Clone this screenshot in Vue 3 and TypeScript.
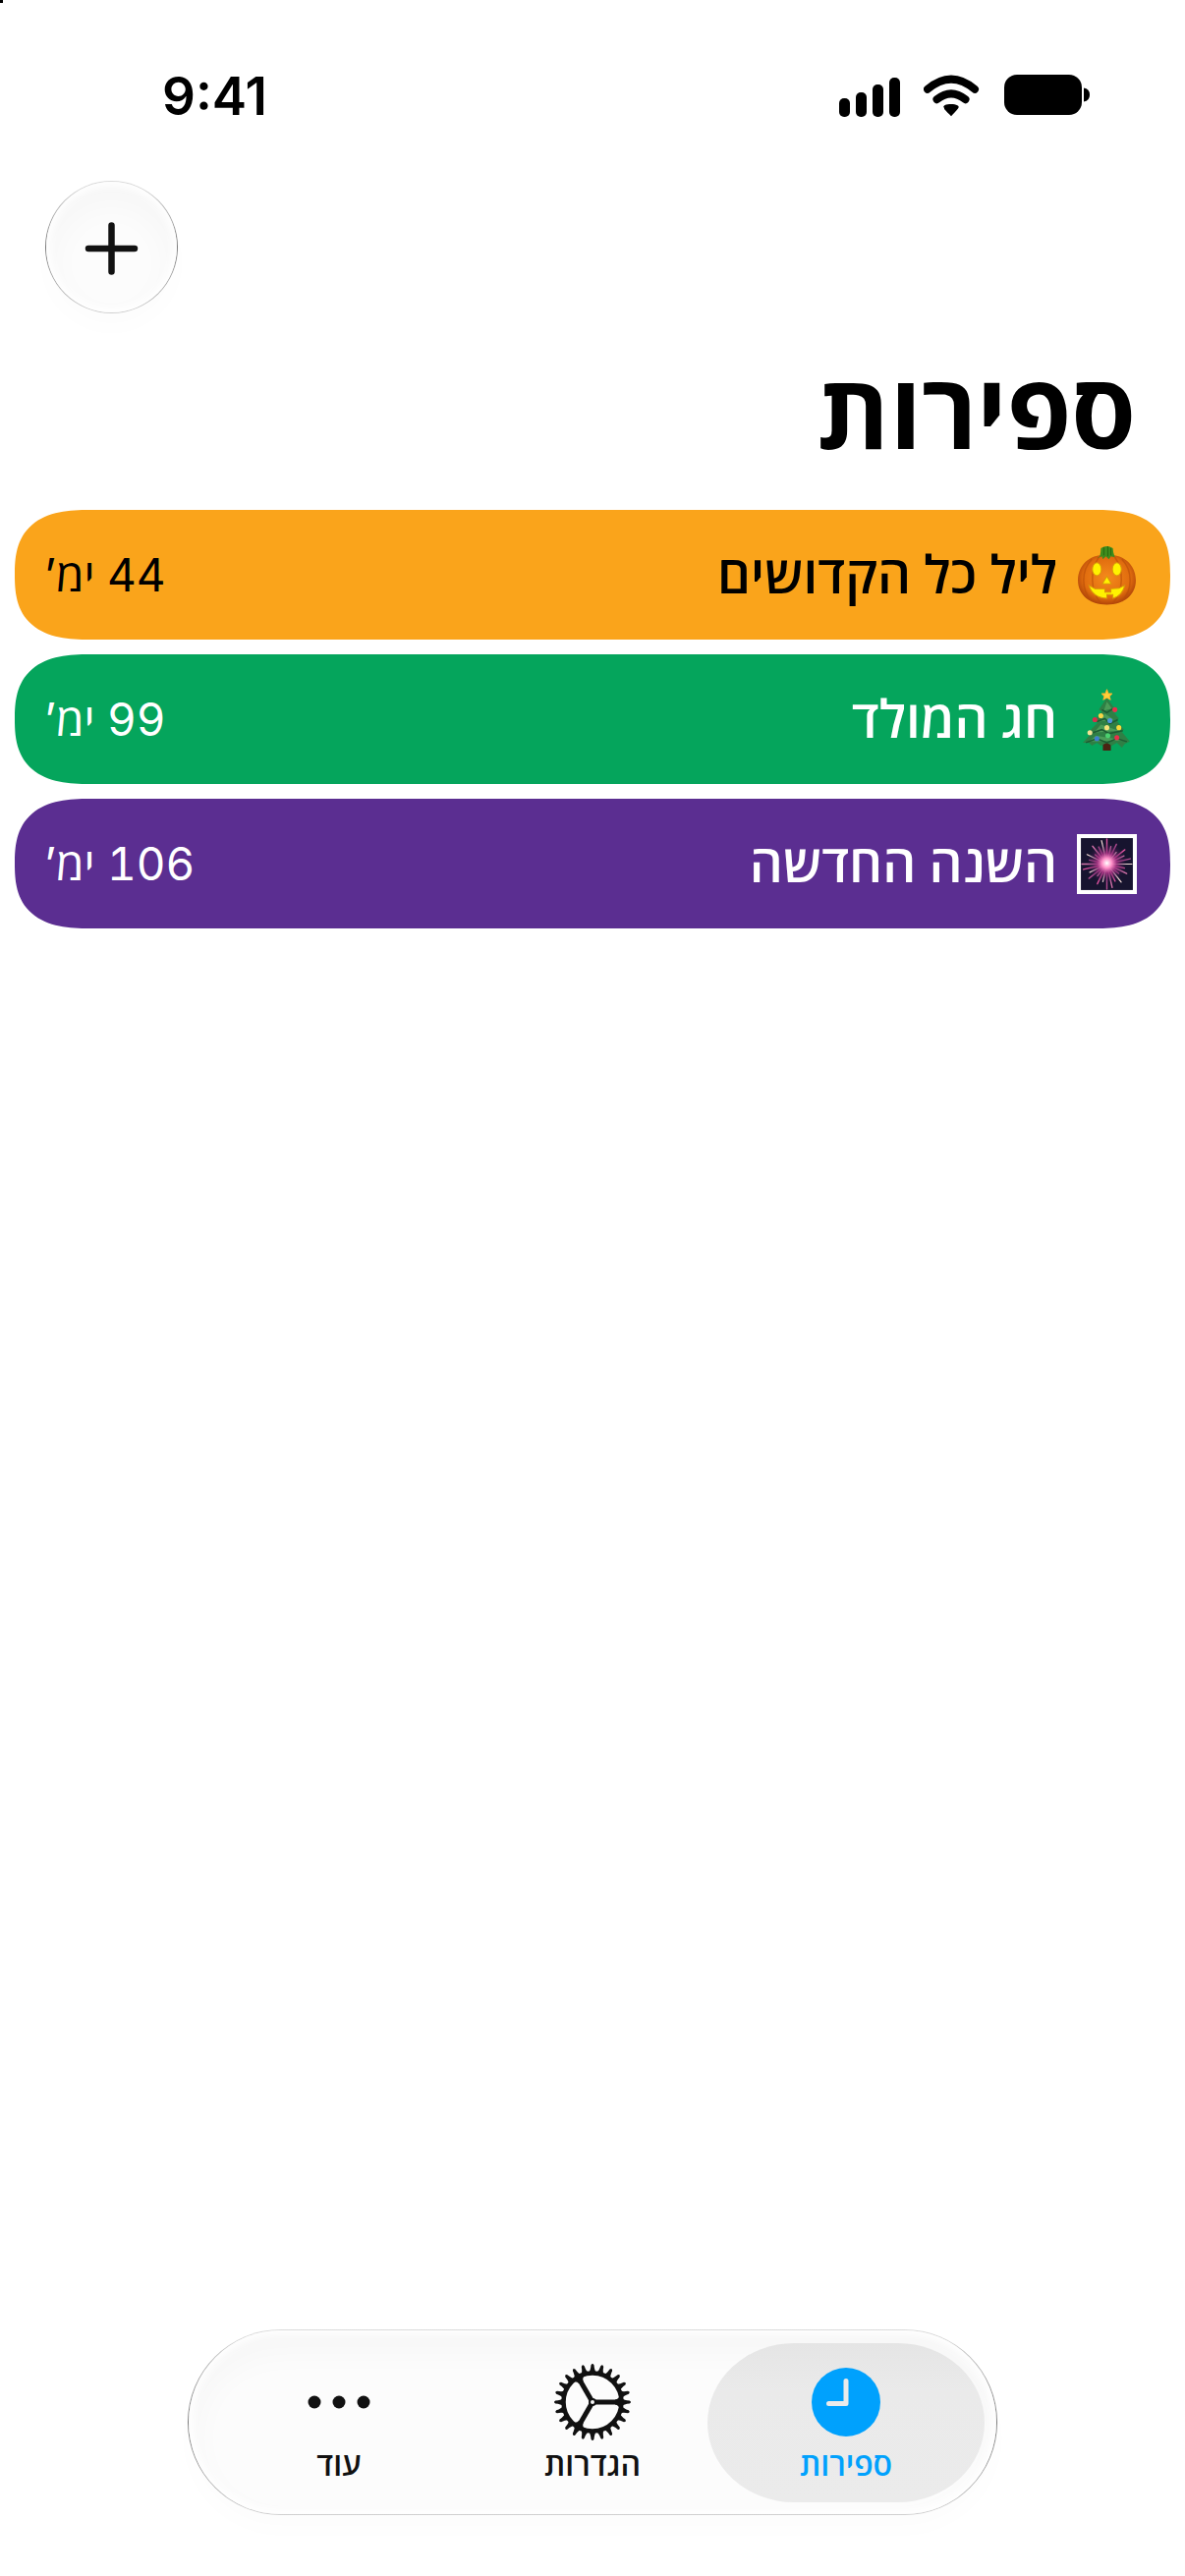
<script setup lang="ts">
type Icon = 'pumpkin' | 'tree' | 'fireworks'

interface Countdown {
  id: Icon
  title: string
  days: number
  background: string
  color: string
}

const countdowns: Countdown[] = [
  { id: 'pumpkin', title: 'ליל כל הקדושים', days: 44, background: '#faa41b', color: '#000000' },
  { id: 'tree', title: 'חג המולד', days: 99, background: '#05a55c', color: '#ffffff' },
  { id: 'fireworks', title: 'השנה החדשה', days: 106, background: '#5b2e91', color: '#ffffff' },
]

const teeth = Array.from({ length: 24 }, (_, i) => i * 15)
const spokes = [0, 120, 240]

const rays = Array.from({ length: 28 }, (_, i) => {
  const angle = (i * Math.PI * 2) / 28
  const reach = [25, 18, 22, 15, 23, 19, 24][i % 7]
  return {
    x: 30 + Math.cos(angle) * reach,
    y: 30 + Math.sin(angle) * reach,
    color: ['#f3d9d6', '#d8509c', '#d070a8', '#b04a90'][i % 4],
    bright: i % 4 === 0,
  }
})

const baubles = [
  { x: 38, y: 20, color: '#e8304a' },
  { x: 24, y: 26, color: '#f7d548' },
  { x: 18, y: 30, color: '#d5304a' },
  { x: 33, y: 31, color: '#4f93dc' },
  { x: 30, y: 38, color: '#f6e27a' },
  { x: 42, y: 38, color: '#f7d93c' },
  { x: 13, y: 43, color: '#f3e295' },
  { x: 20, y: 49, color: '#3d7fd0' },
  { x: 31, y: 46, color: '#4cd06f' },
  { x: 40, y: 48, color: '#e8304a' },
]
</script>

<template>
  <div class="app" dir="rtl">
    <span class="corner"></span>
    <header class="status" dir="ltr">
      <time class="clock">9:41</time>
      <div class="indicators">
        <svg width="62" height="44" viewBox="0 0 62 44">
          <rect x="0" y="24" width="11" height="19" rx="5" />
          <rect x="17" y="18" width="11" height="25" rx="5" />
          <rect x="34" y="10" width="11" height="33" rx="5" />
          <rect x="51" y="3" width="11" height="40" rx="5" />
        </svg>
        <svg width="58" height="44" viewBox="1 0 58 44">
          <g fill="none" stroke="#000" stroke-width="8" stroke-linecap="round">
            <path d="M5 14.800 Q29 -5.500 53 14.800" />
            <path d="M14.500 25.200 Q29 13.500 43.500 25.200" />
          </g>
          <path d="M22 34 C19.500 31.500 24 30 29 30 C34 30 38.500 31.500 36 34.500 C34 37 31 40 29.500 41.800 Q29 42.600 28.500 41.800 C27 40 24 37.500 22 35Z" />
        </svg>
        <svg width="88" height="44" viewBox="0 0 88 44">
          <rect x="0" y="0" width="79" height="41" rx="13" />
          <path d="M81 13.500 Q87 14.500 87 20.500 Q87 26.500 81 27.500Z" />
        </svg>
      </div>
    </header>

    <div class="toolbar">
      <button class="add glass" type="button" aria-label="הוספה">
        <svg width="55" height="57" viewBox="0 0 55 57">
          <path d="M27.500 6.500V53.500M4 30H51" fill="none" stroke="#111" stroke-width="6.500" stroke-linecap="round" />
        </svg>
      </button>
    </div>

    <main>
      <h1>ספירות</h1>
      <ul class="list">
        <li
          v-for="item in countdowns"
          :key="item.id"
          class="card"
          :style="{ background: item.background, color: item.color }"
        >
          <svg v-if="item.id === 'pumpkin'" class="emoji" viewBox="0 0 60 60">
            <defs>
              <radialGradient id="skin" cx=".5" cy=".45" r=".58">
                <stop offset="0" stop-color="#f58a1c" />
                <stop offset=".7" stop-color="#e06c0e" />
                <stop offset="1" stop-color="#a63c08" />
              </radialGradient>
            </defs>
            <path d="M30 11 C42 7 59 17 59 35 C59 50 47 59.500 30 59.500 C13 59.500 1 50 1 35 C1 17 18 7 30 11Z" fill="url(#skin)" />
            <path d="M15 14 C4 25 4 45 15 56 M22 12 C13 24 13 46 24 58 M45 14 C56 25 56 45 45 56 M38 12 C47 24 47 46 36 58" fill="none" stroke="#b84c09" stroke-opacity=".6" stroke-width="1.500" />
            <path d="M23 11 Q24 7 24 3 Q30 -1 36 3 Q36 7 38 12 L34 11 L32 14 L29 11 L26 14 L25 11 L20 13Z" fill="#3f8c1c" />
            <path d="M27 2V10M31 1V11M34 3V10" stroke="#2b6b12" stroke-width="1" />
            <g fill="#fff200" stroke="#d9950a" stroke-width="1">
              <ellipse cx="20" cy="24" rx="4.500" ry="6.500" />
              <ellipse cx="40" cy="24" rx="4.500" ry="6.500" />
              <path d="M30 31 L34.500 38.500 H25.500Z" />
              <path d="M12 40 L18 43.500 H28 V47 H34 V43.500 L42 43 L48 40 C46 48 41 52 36 53 V49.500 H30 V53 C21 53 14 48 12 40Z" />
            </g>
          </svg>
          <svg v-else-if="item.id === 'tree'" class="emoji" viewBox="0 0 60 60">
            <path d="M26 50H34V61H26Z" fill="#4a2413" />
            <path d="M30 8 L37 18 L34 19 L42 29 L39 30 L47 40 L44 41 L53 52 L48 54 L45 58 L40 53 L35 56 L30 53 L24 56 L20 53 L15 56 L12 53 L6 53 L15 43 L12 42 L21 33 L17 32 L25 22 L22 20Z" fill="#2f7f45" />
            <path d="M30 12 L35 19 L27 21Z M28 24 L37 30 L22 32Z M24 35 L42 41 L17 43Z M19 46 L48 51 L12 52Z" fill="#4b9c58" />
            <path d="M25 20 L30 23 L36 19 M20 32 L28 29 L33 34 L41 30 M16 43 L25 40 L32 44 L46 41 M9 53 L20 49 L30 53 L40 49 L50 52" fill="none" stroke="#1d5b33" stroke-width="1.500" />
            <path d="M30 0 L31.500 4 L35 4 L32.500 6.500 L33.500 10 L30 8 L26.500 10 L27.500 6.500 L25 4 L28.500 4Z" fill="#ffd23a" stroke="#ffb52e" stroke-linejoin="round" />
            <circle v-for="(b, i) in baubles" :key="i" :cx="b.x" :cy="b.y" r="2.500" :fill="b.color" />
          </svg>
          <svg v-else class="emoji" viewBox="0 0 60 60">
            <defs>
              <radialGradient id="glow">
                <stop offset="0" stop-color="#fff" />
                <stop offset=".25" stop-color="#ff8fc8" />
                <stop offset=".5" stop-color="#a03080" stop-opacity=".8" />
                <stop offset="1" stop-color="#301a48" stop-opacity="0" />
              </radialGradient>
            </defs>
            <rect width="60" height="60" fill="#fff" />
            <rect x="4" y="4" width="52" height="52" fill="#17142f" />
            <line v-for="(r, i) in rays" :key="i" x1="30" y1="30" :x2="r.x" :y2="r.y" :stroke="r.color" :stroke-width="r.bright ? 1.2 : 1.4" stroke-linecap="round" />
            <circle cx="30" cy="29" r="20" fill="url(#glow)" />
          </svg>
          <span class="name">{{ item.title }}</span>
          <span class="days">{{ item.days }} ימ’</span>
        </li>
      </ul>
    </main>

    <nav class="tabs glass">
      <button class="tab active" type="button" aria-current="page">
        <svg width="80" height="80" viewBox="0 0 80 80">
          <circle cx="40" cy="40" r="35" fill="#00a1fd" />
          <path d="M40 18.500V41.500H22.500" fill="none" stroke="#ebebeb" stroke-width="5" stroke-linecap="round" stroke-linejoin="round" />
        </svg>
        <span>ספירות</span>
      </button>
      <button class="tab" type="button">
        <svg width="80" height="80" viewBox="0 0 80 80">
          <circle cx="40" cy="40" r="29.500" fill="none" stroke="#111" stroke-width="4.500" />
          <g fill="#111">
            <path v-for="t in teeth" :key="t" :transform="`rotate(${t} 40 40)`" d="M36 10 Q38 8 38.500 2.300 Q40 -.300 41.500 2.300 Q42 8 44 10Z" />
          </g>
          <g v-for="s in spokes" :key="s" :transform="`rotate(${s} 40 40)`">
            <path d="M42 40H68" stroke="#111" stroke-width="5" />
            <path d="M63 37.500 Q67 37 68 32 V48 Q67 43 63 42.500Z" fill="#111" />
          </g>
          <circle cx="40" cy="40" r="3" fill="#fcfcfc" stroke="#111" stroke-width="2" />
        </svg>
        <span>הגדרות</span>
      </button>
      <button class="tab" type="button">
        <svg width="80" height="80" viewBox="0 0 80 80" fill="#111">
          <circle cx="15" cy="40" r="6.500" />
          <circle cx="40" cy="40" r="6.500" />
          <circle cx="65" cy="40" r="6.500" />
        </svg>
        <span>עוד</span>
      </button>
    </nav>
  </div>
</template>

<style>
body {
  background: #fff;
}
</style>

<style scoped>
.app {
  position: relative;
  display: flex;
  flex-direction: column;
  box-sizing: border-box;
  min-height: 100vh;
  padding-bottom: 62px;
  background: #fff;
  color: #000;
  font-family: Inter, 'Open Sans', 'Liberation Sans', sans-serif;
}

.corner {
  position: absolute;
  top: 0;
  left: 0;
  width: 3px;
  height: 3px;
  background: #000;
}

.status {
  display: flex;
  align-items: center;
  justify-content: space-between;
  height: 64px;
  padding: 66px 96px 0 165px;
}

.clock {
  font-size: 53px;
  font-weight: 600;
  line-height: 64px;
}

.indicators {
  display: flex;
  gap: 24px;
}

.toolbar {
  display: flex;
  justify-content: flex-end;
  padding: 54px 46px 0;
}

button {
  border: 0;
  padding: 0;
  background: none;
  color: #111;
  font: inherit;
}

.glass {
  border: 1px solid transparent;
  background:
    linear-gradient(#fcfcfc, #fcfcfc) padding-box,
    linear-gradient(#dcdcdc, #7c7c7c 50%, #d0d0d0) border-box;
  box-shadow:
    inset 0 0 10px 4px #fff,
    inset 0 16px 32px 8px rgba(0, 0, 0, 0.025),
    0 16px 24px rgba(0, 0, 0, 0.012);
}

.add {
  display: flex;
  align-items: center;
  justify-content: center;
  box-sizing: border-box;
  width: 135px;
  height: 135px;
  border-radius: 50%;
}

h1 {
  margin: 0;
  padding: 48px 50px 0;
  font-size: 106px;
  font-weight: 700;
  line-height: 104px;
}

.list {
  display: flex;
  flex-direction: column;
  gap: 15px;
  margin: 48px 0 0;
  padding: 0 15px;
  list-style: none;
}

.card {
  display: flex;
  align-items: center;
  height: 132px;
  padding: 0 34px 0 30px;
  border-radius: 56px;
}

@supports (corner-shape: superellipse(1.4)) {
  .card {
    border-radius: 76px / 66px;
    corner-shape: superellipse(1.4);
  }
}

.emoji {
  flex: none;
  width: 61px;
  height: 61px;
  overflow: visible;
}

.name {
  flex: 1;
  margin-right: 20px;
  font-size: 53px;
  font-weight: 600;
  line-height: 64px;
}

.days {
  font-size: 46px;
  font-variant-numeric: tabular-nums;
  line-height: 64px;
}

.tabs {
  display: flex;
  box-sizing: border-box;
  height: 189px;
  margin: auto 191px 0;
  padding: 13px 24px 12px;
  border-radius: 95px;
}

.tab {
  position: relative;
  display: flex;
  flex: 1;
  flex-direction: column;
  align-items: center;
  padding-top: 20px;
  font-size: 32px;
  font-weight: 600;
  line-height: 40px;
}

.tab svg,
.tab span {
  position: relative;
}

.tab span {
  margin-top: 4px;
}

.active {
  color: #00a1fd;
}

.active::before {
  content: '';
  position: absolute;
  inset: 0 -12px;
  border-radius: 88px / 81px;
  background: linear-gradient(#e5e5e5, #eaeaea 30%, #ebebeb);
}
</style>
